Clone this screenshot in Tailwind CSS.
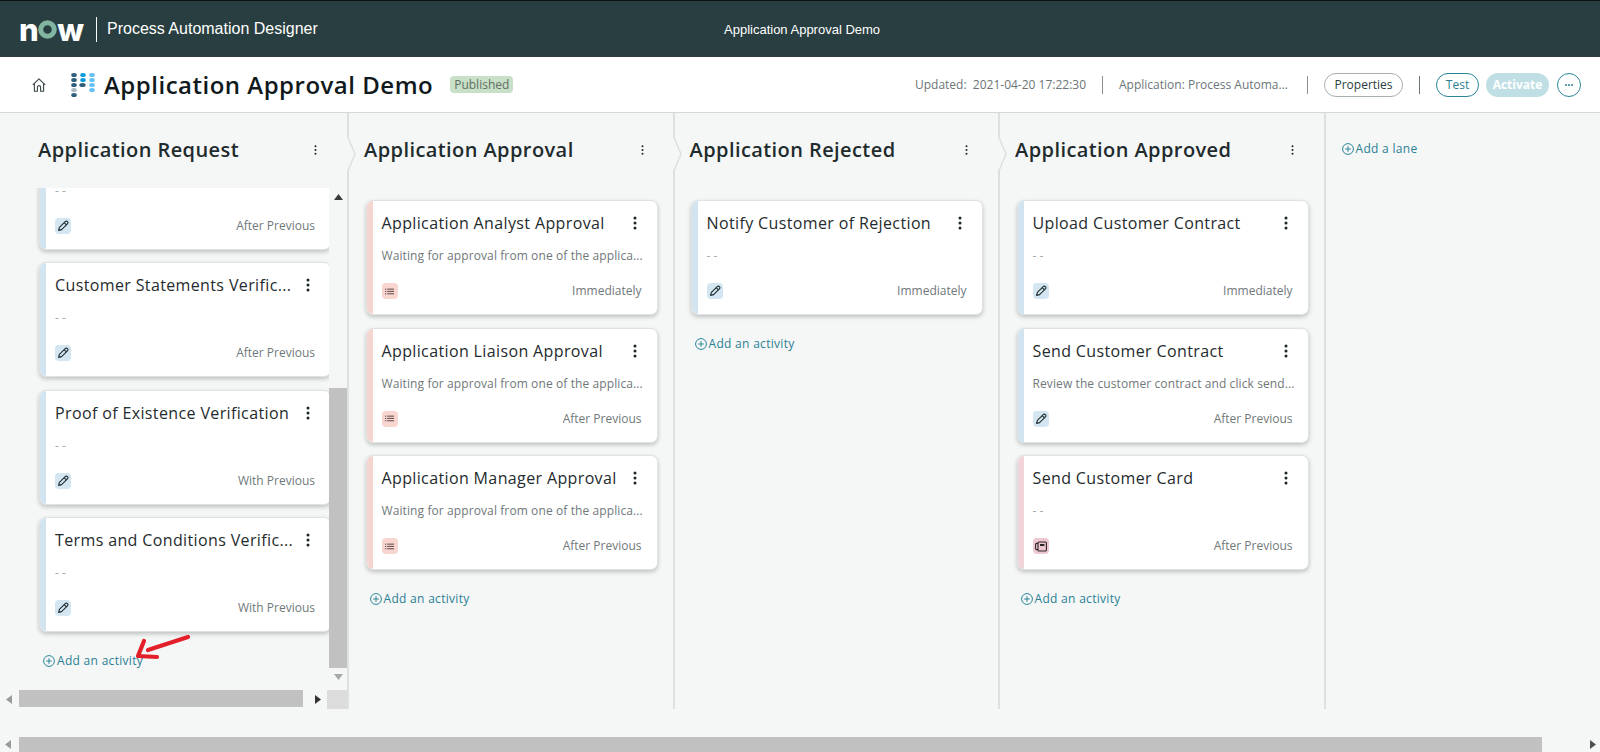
<!DOCTYPE html>
<html lang="en">
<head>
    <meta charset="UTF-8">
    <title>Application Approval Demo</title>
    <script src="https://cdn.jsdelivr.net/npm/@tailwindcss/browser@4"></script>
</head>
<body class="relative h-[752px] w-[1600px] overflow-hidden bg-[#f5f7f7] font-['Open_Sans',sans-serif]">
    <!-- top bar -->
    <div class="relative flex h-[57px] items-center border-t border-[#111] bg-[#293e40] pl-[19px]">
        <div class="flex h-[24px] w-[63px] items-center font-['Inter',sans-serif] text-[31px] leading-none font-extrabold tracking-[-1.5px] text-white">
            <span>n</span>
            <svg class="mx-[0.5px] shrink-0" width="19" height="19" viewBox="0 0 19 19"><circle cx="9.5" cy="9.5" r="6.8" fill="none" stroke="#81b5a1" stroke-width="5"/></svg>
            <span>w</span>
        </div>
        <div class="ml-[14px] h-[25px] w-px bg-white"></div>
        <span class="ml-[10px] font-['Liberation_Sans',sans-serif] text-[16px] text-white">Process Automation Designer</span>
        <span class="absolute top-[19px] left-[724px] font-['Liberation_Sans',sans-serif] text-[13px] leading-[20px] text-white">Application Approval Demo</span>
    </div>

    <!-- page header -->
    <div class="flex h-[56px] items-center border-b border-[#d6d9d9] bg-white">
        <svg class="ml-[32px]" width="14" height="14" viewBox="0 0 14 14" fill="none" stroke="#3b4648" stroke-width="1.1" stroke-linejoin="round"><path d="M.8 6.8 7 .8l6.2 6"/><path d="M2.4 5.6v7.6h3V9.2a1.6 1.6 0 0 1 3.2 0v4h3V5.6"/></svg>
        <svg class="ml-[24px]" width="26" height="26" viewBox="0 0 26 26">
            <ellipse cx="4" cy="3" rx="2.8" ry="2" fill="#2f5d7c"/><ellipse cx="4" cy="8" rx="2.8" ry="2" fill="#2f5d7c"/><ellipse cx="4" cy="13" rx="2.8" ry="2" fill="#2f5d7c"/><ellipse cx="4" cy="18" rx="2.8" ry="2" fill="#a9b8c0"/><ellipse cx="4" cy="23" rx="2.8" ry="2" fill="#2f5d7c"/>
            <ellipse cx="13" cy="3" rx="2.8" ry="2" fill="#0f9ade"/><ellipse cx="13" cy="8" rx="2.8" ry="2" fill="#0f9ade"/><ellipse cx="12.5" cy="13" rx="3.2" ry="2" fill="#2f5d7c"/>
            <ellipse cx="22" cy="3" rx="2.8" ry="2" fill="#63c1f5"/><ellipse cx="22" cy="8" rx="2.8" ry="2" fill="#63c1f5"/><ellipse cx="22" cy="13" rx="2.8" ry="2" fill="#63c1f5"/><ellipse cx="22" cy="18" rx="2.8" ry="2" fill="#63c1f5"/>
        </svg>
        <h1 class="ml-[8px] text-[24px] leading-none font-semibold tracking-[0.5px] text-[#10191b]">Application Approval Demo</h1>
        <span class="ml-[17px] rounded-[4px] bg-[#c8dfc8] px-[4px] text-[12px] leading-[17px] text-[#5f6f62]">Published</span>

        <div class="ml-auto flex items-center text-[12px] text-[#6c7577]">
            <span class="whitespace-pre">Updated:  2021-04-20 17:22:30</span>
            <div class="mx-[16px] h-[18px] w-px bg-[#8a9092]"></div>
            <span>Application: Process Automa...</span>
            <div class="mr-[16px] ml-[19px] h-[18px] w-px bg-[#8a9092]"></div>
        </div>
        <button class="flex h-[24px] w-[79px] items-center justify-center rounded-full border border-[#a8afb0] text-[12px] font-medium text-[#293e40]">Properties</button>
        <div class="mx-[16px] h-[18px] w-px bg-[#6c7577]"></div>
        <button class="flex h-[24px] w-[43px] items-center justify-center rounded-full border border-[#2a8599] text-[12px] font-medium text-[#2a7f92]">Test</button>
        <button class="ml-[7px] flex h-[24px] w-[63px] items-center justify-center rounded-full bg-[#c0dfe5] text-[12px] font-bold text-white">Activate</button>
        <button class="mr-[19px] ml-[8px] flex h-[24px] w-[24px] items-center justify-center rounded-full border border-[#2a8599]">
            <svg width="10" height="4" viewBox="0 0 10 4" fill="#2a7f92"><circle cx="2" cy="2" r="1"/><circle cx="5" cy="2" r="1"/><circle cx="8" cy="2" r="1"/></svg>
        </button>
    </div>

    <!-- lanes -->
    <div id="board" class="flex h-[596px]"></div>

    <!-- page scrollbar -->
    <div class="mt-[28px] flex h-[15px] items-center">
        <svg class="ml-[5px]" width="6" height="9" viewBox="0 0 6 9" fill="#9a9a9a"><path d="M6 0v9L0 4.5z"/></svg>
        <div class="ml-[8px] h-[15px] w-[1523px] bg-[#c1c1c1]"></div>
        <svg class="ml-[48px]" width="6" height="9" viewBox="0 0 6 9" fill="#505050"><path d="M0 0v9l6-4.5z"/></svg>
    </div>

    <!-- red annotation arrow -->
    <svg class="absolute top-[630px] left-[130px]" width="65" height="35" viewBox="0 0 65 35" fill="none" stroke="#e3202a" stroke-width="4.2" stroke-linecap="round" stroke-linejoin="round">
        <path d="M58 7 18 20"/><path d="M14 11 8 26l19 1"/>
    </svg>

    <script>
        const pencil = '<svg width="12" height="12" viewBox="0 0 12 12" fill="none" stroke="#1f2b2d" stroke-width="1.1" stroke-linejoin="round"><path d="M1.6 10.4 2.4 7.4 8.2 1.6a1.3 1.3 0 0 1 2.2 2.2L4.6 9.6z"/><path d="M7.2 2.6l2.2 2.2"/></svg>';
        const list = '<svg width="9" height="7" viewBox="0 0 9 7" fill="#6b5454"><rect x="0" y="0.6" width="1.2" height="1.1"/><rect x="0" y="2.9" width="1.2" height="1.1"/><rect x="0" y="5.2" width="1.2" height="1.1"/><rect x="2.2" y="0.6" width="6.8" height="1.1"/><rect x="2.2" y="2.9" width="6.8" height="1.1"/><rect x="2.2" y="5.2" width="6.8" height="1.1"/></svg>';
        const cardIcon = '<svg width="12" height="11" viewBox="0 0 12 11" fill="none" stroke="#2d2628" stroke-width="1.1"><rect x="3" y="1" width="8.4" height="9" rx="1"/><path d="M3 2.4H1.6a1 1 0 0 0-1 1v4.2a1 1 0 0 0 1 1H3"/><rect x="5" y="3" width="4.4" height="2" fill="#2d2628" stroke="none"/></svg>';
        const kebab = '<svg width="4" height="14" viewBox="0 0 4 14" fill="#1c2527"><circle cx="2" cy="2" r="1.5"/><circle cx="2" cy="7" r="1.5"/><circle cx="2" cy="12" r="1.5"/></svg>';
        const smallKebab = '<svg width="3" height="10" viewBox="0 0 3 10" fill="#1c2527"><circle cx="1.5" cy="1.3" r="1"/><circle cx="1.5" cy="5" r="1"/><circle cx="1.5" cy="8.7" r="1"/></svg>';
        const plus = '<svg width="12" height="12" viewBox="0 0 12 12" fill="none" stroke="#2a8599"><circle cx="6" cy="6" r="5.4"/><path d="M6 3.2v5.6M3.2 6h5.6"/></svg>';
        const chevron = '<svg class="absolute top-[22px] -right-[10px] z-10" width="10" height="38" viewBox="0 0 10 38" fill="#f5f7f7" stroke="#dde0e0" stroke-width="1.5"><path d="M0 0 8 19 0 38"/></svg>';

        const styles = {
            blue: { accent: 'bg-[#d2e4f0]', chip: 'bg-[#d3e6f1]', icon: pencil },
            red: { accent: 'bg-[#f4d5d0]', chip: 'bg-[#f8d5cf]', icon: list },
            pink: { accent: 'bg-[#f0d4da]', chip: 'bg-[#eec8d0]', icon: cardIcon }
        };

        function card(title, desc, kind, timing) {
            const s = styles[kind];
            const descClass = desc === '- -' ? 'text-[#a3a9aa]' : 'text-[#70787a] tracking-[0.1px]';
            return `
                <div class="mb-[12.5px] flex h-[115px] w-[292px] shrink-0 overflow-hidden rounded-[7px] border border-[#e0e3e3] bg-white shadow-[0_2px_4px_rgba(0,0,0,0.22)]">
                    <div class="w-[6px] shrink-0 ${s.accent}"></div>
                    <div class="flex min-w-0 flex-1 flex-col pt-[9px] pr-[15px] pl-[9px]">
                        <div class="flex h-[26px] items-center justify-between pr-[5px]">
                            <span class="text-[16px] tracking-[0.37px] whitespace-nowrap text-[#1f2b2d]">${title}</span>
                            ${kebab}
                        </div>
                        <div class="mt-[10px] h-[20px] text-[12px] leading-[20px] whitespace-nowrap ${descClass}">${desc}</div>
                        <div class="mt-[16px] flex items-center justify-between">
                            <span class="flex h-[16px] w-[16px] items-center justify-center rounded-[4px] ${s.chip}">${s.icon}</span>
                            <span class="text-[12px] text-[#70787a]">${timing}</span>
                        </div>
                    </div>
                </div>`;
        }

        function addLink(label) {
            return `<div class="flex items-center gap-[2px] text-[12px] font-medium tracking-[0.3px] whitespace-nowrap text-[#2a8094]">${plus}<span>${label}</span></div>`;
        }

        function laneHead(title) {
            return `
                <div class="flex h-[75px] shrink-0 items-center justify-between pb-[1px]">
                    <h2 class="text-[20px] font-semibold tracking-[0.42px] whitespace-nowrap text-[#1f2b2d]">${title}</h2>
                    ${smallKebab}
                </div>`;
        }

        const msg = 'Waiting for approval from one of the applica...';
        const lanes = [
            { title: 'Application Approval', pad: 'pl-[16.5px]', head: '-ml-[1.5px] pr-[14px]', cards: [
                ['Application Analyst Approval', msg, 'red', 'Immediately'],
                ['Application Liaison Approval', msg, 'red', 'After Previous'],
                ['Application Manager Approval', msg, 'red', 'After Previous'] ] },
            { title: 'Application Rejected', pad: 'pl-[16px]', head: '-ml-[1px] pr-[15px]', cards: [
                ['Notify Customer of Rejection', '- -', 'blue', 'Immediately'] ] },
            { title: 'Application Approved', pad: 'pl-[16.5px]', head: '-ml-[1.5px] pr-[15px]', cards: [
                ['Upload Customer Contract', '- -', 'blue', 'Immediately'],
                ['Send Customer Contract', 'Review the customer contract and click send...', 'blue', 'After Previous'],
                ['Send Customer Card', '- -', 'pink', 'After Previous'] ] }
        ];

        const firstCards = [
            ['', '- -', 'blue', 'After Previous'],
            ['Customer Statements Verific...', '- -', 'blue', 'After Previous'],
            ['Proof of Existence Verification', '- -', 'blue', 'With Previous'],
            ['Terms and Conditions Verific...', '- -', 'blue', 'With Previous']
        ];

        // first lane has its own scrollbars, so it is built separately
        const firstLane = `
            <div class="relative flex w-[349px] shrink-0 flex-col border-r-2 border-[#dde0e0]">
                ${chevron}
                <div class="pr-[30px] pl-[38px]">${laneHead('Application Request')}</div>
                <div class="flex h-[502px]">
                    <div class="w-[329px] overflow-hidden pl-[39px]">
                        <div class="-mt-[53.5px]">${firstCards.map(c => card(...c)).join('')}</div>
                        <div class="mt-[19.5px] ml-[4px]">${addLink('Add an activity')}</div>
                    </div>
                    <div class="flex w-[18px] flex-col items-center">
                        <svg class="mt-[6px] mb-[188px]" width="9" height="6" viewBox="0 0 9 6" fill="#3a3a3a"><path d="M0 6h9L4.5 0z"/></svg>
                        <div class="h-[280px] w-full bg-[#c1c1c1]"></div>
                        <svg class="mt-[6px]" width="9" height="6" viewBox="0 0 9 6" fill="#a8a8a8"><path d="M0 0h9L4.5 6z"/></svg>
                    </div>
                </div>
                <div class="flex h-[19px] items-center">
                    <svg class="ml-[6px]" width="6" height="9" viewBox="0 0 6 9" fill="#9a9a9a"><path d="M6 0v9L0 4.5z"/></svg>
                    <div class="ml-[7px] h-[17px] w-[284px] self-start bg-[#c1c1c1]"></div>
                    <svg class="ml-[12px]" width="6" height="9" viewBox="0 0 6 9" fill="#333"><path d="M0 0v9l6-4.5z"/></svg>
                    <div class="ml-[6px] h-[19px] flex-1 bg-[#dcdcdc]"></div>
                </div>
            </div>`;

        const otherLanes = lanes.map((lane, i) => `
            <div class="relative flex w-[325.5px] shrink-0 flex-col border-r-2 border-[#dde0e0] ${lane.pad}">
                ${i < 2 ? chevron : ''}
                <div class="w-[292px]">
                    <div class="${lane.head}">${laneHead(lane.title)}</div>
                    <div class="mt-[12px]">${lane.cards.map(c => card(...c)).join('')}</div>
                    <div class="mt-[20px] ml-[4px]">${addLink('Add an activity')}</div>
                </div>
            </div>`).join('');

        const addLane = `<div class="flex h-[75px] items-center pb-[3px] pl-[16px]">${addLink('Add a lane')}</div>`;

        document.getElementById('board').innerHTML = firstLane + otherLanes + addLane;
    </script>
</body>
</html>
